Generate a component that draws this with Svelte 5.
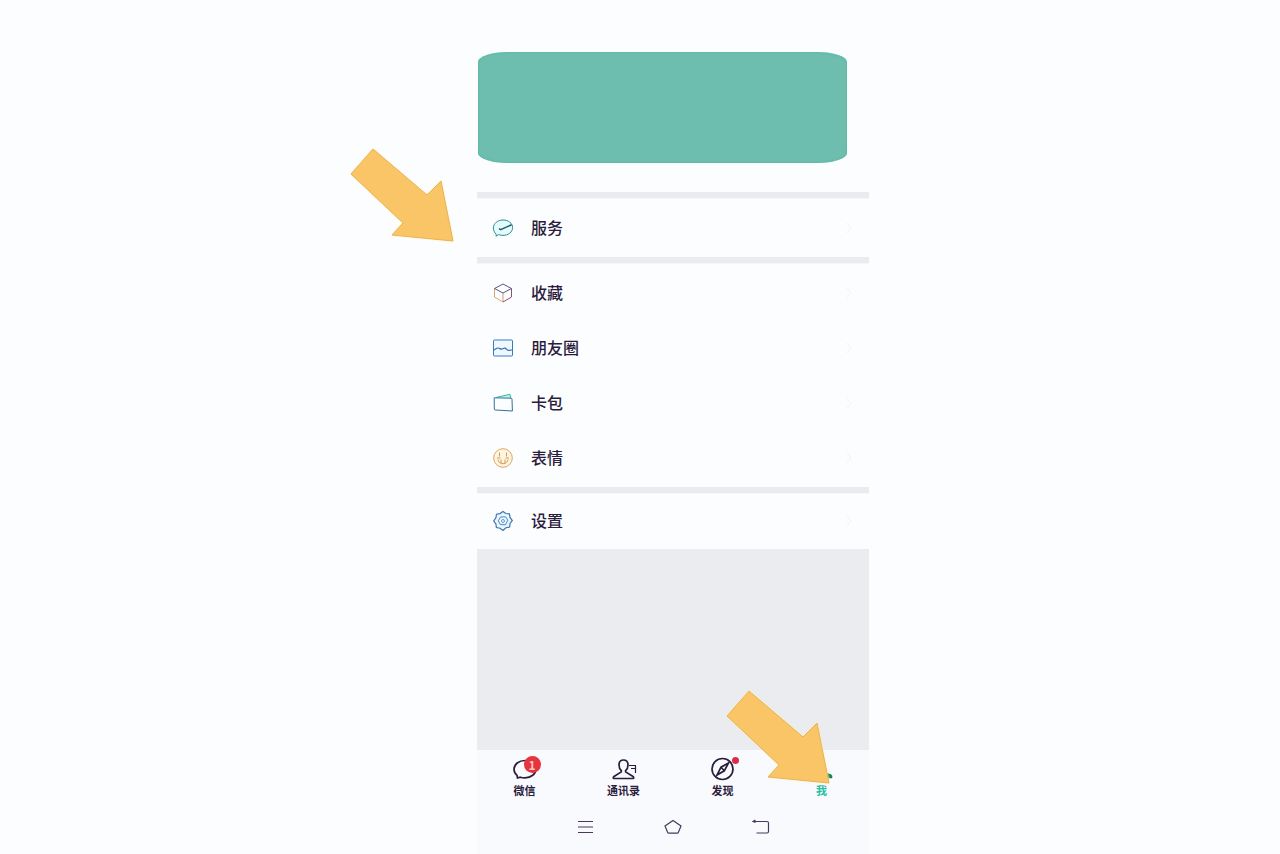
<script lang="ts">
  const groups = [
    [{ id: "service", label: "服务" }],
    [
      { id: "favorites", label: "收藏" },
      { id: "moments", label: "朋友圈" },
      { id: "cards", label: "卡包" },
      { id: "stickers", label: "表情" }
    ],
    [{ id: "settings", label: "设置" }]
  ];

  const tabs = [
    { id: "chats", label: "微信" },
    { id: "contacts", label: "通讯录" },
    { id: "discover", label: "发现" },
    { id: "me", label: "我" }
  ];

  let active = $state("me");
</script>

{#snippet arrow(place: string)}
  <svg class="arrow {place}" viewBox="0 0 104 94" aria-hidden="true">
    <path d="M23 1 77 47 91 33 103 93 42 87 53 75 1 26Z" />
  </svg>
{/snippet}

<div class="page">
  <main class="phone">
    <header class="profile">
      <div class="profile-card"></div>
    </header>

    {#each groups as group}
      <ul class="group">
        {#each group as item}
          <li>
            <button class="row">
              <svg class="row-icon" viewBox="0 0 22 22" aria-hidden="true">
                {#if item.id === "service"}
                  <path d="M4.2 17.2C2.4 15.6 1.4 13.4 1.4 11 1.4 6.4 5.7 3 11 3s9.6 3.200 9.600 7.600-4.300 7.800-9.600 7.800c-1.600 0-3-.3-4.400-.8L4 19.200Z" fill="#e4fbfc" stroke="#338a94" />
                  <path d="m7 11.600 1.600 1 11-4.800" fill="none" stroke="#205f70" stroke-width="1.500" />
                {:else if item.id === "favorites"}
                  <path d="M2.500 6.500V15l8.500 5" fill="none" stroke="#dfa368" />
                  <path d="M11 20V11" fill="none" stroke="#d49a75" />
                  <path d="m11 20 8.500-5V6.500" fill="none" stroke="#8a5078" />
                  <path d="M11 2 2.500 6.500 11 11l8.500-4.500Z" fill="none" stroke="#5a5488" />
                {:else if item.id === "moments"}
                  <rect x="1.500" y="3" width="19" height="16" rx="1" fill="#eef8ff" stroke="#3b79bd" />
                  <path d="M1.500 13c2-.3 2.500-2 4.500-2 1.500 0 2.200 1.200 3.500 1.200 1.600 0 2.200-1.500 3.600-1.100 1.800.6 2 2.800 4 2.300 1-.3 1.600-.5 2.900-.4" fill="none" stroke="#3b70ac" stroke-width="1.200" />
                {:else if item.id === "cards"}
                  <path d="m4 5.500 14-3.200.8 3.600" fill="#bdf3e4" stroke="#38b6a0" />
                  <path d="M2.200 5.800 19 6.200q1 0 1 1L20.400 19 3.400 18q-1 0-1.100-1Z" fill="#fbfdff" stroke="#326f9a" />
                {:else if item.id === "stickers"}
                  <circle cx="11" cy="11" r="9.300" fill="#fff4df" stroke="#dca75f" />
                  <path d="M7.500 5.500v4M14.500 5.500v4M5 11h3.500M13.500 11H17M6 12.500c.5 2.800 2.300 4.200 5 4.200s4.500-1.400 5-4.200M9 12.500v3.500M13 12.500v3.500" fill="none" stroke="#d29a58" />
                {:else}
                  <path d="m11 1.500 2.800 2 3.600.4.6 3.500 2.300 3-2.200 3-.5 3.700-3.700.6L11 20.500l-3-2.300-3.600-.7-.5-3.500L1.700 11l2.200-3.200.6-3.600 3.500-.6Z" fill="#e9f5ff" stroke="#3d77ae" stroke-width="1.200" />
                  <path d="m8.500 7 5-.2 2.300 3.400-2.300 4.600-5.200-.3-2-3.700Z" fill="none" stroke="#4b8ac4" />
                  <circle cx="11" cy="11" r="1.500" fill="none" stroke="#69a0d2" />
                {/if}
              </svg>
              <span class="row-label">{item.label}</span>
              <svg class="chevron" viewBox="0 0 6 12" aria-hidden="true">
                <path d="m1 1 4 5-4 5" />
              </svg>
            </button>
          </li>
        {/each}
      </ul>
    {/each}

    <div class="filler"></div>

    <footer>
      <nav class="tabs">
        {#each tabs as tab}
          <button class="tab" class:active={active === tab.id} onclick={() => (active = tab.id)}>
            <span class="tab-icon">
              <svg viewBox="0 0 28 24" aria-hidden="true">
                {#if tab.id === "chats"}
                  <path d="M6 18.300C4 16.700 3 14.700 3 12.300 3 7.200 8 3.500 14 3.500s11 3.600 11 8.500-5 8.800-11 8.800c-1.800 0-3.200-.1-4.700-.6L6.500 21Z" />
                {:else if tab.id === "contacts"}
                  <path d="M11.300 13.700C9.400 12 9 10.300 9 8c0-3 1.800-5 4.500-5S18 5 18 8c0 2.300-.5 4-2.400 5.700v1.200l7.400 4.600c1 .8 1 2 0 2H4c-1 0-1-1.200 0-2l7.300-4.600Z" />
                  <path d="M19 8.500h7M21 11.500h5M25.500 9v7" stroke-width="1.200" />
                {:else if tab.id === "discover"}
                  <circle cx="13.500" cy="12" r="10.500" />
                  <path d="M19.500 6 12 10.200 8 18l7.300-4.200Z" />
                  <path d="m12 10.200 3.300 3.600" />
                {:else}
                  <circle cx="12" cy="9" r="3.500" />
                  <path d="M4 20.500q0-1 1-1.600l5-2.400h8l4.500 1.500q1.500.8 1 2.500Z" />
                {/if}
              </svg>
              {#if tab.id === "chats"}
                <span class="badge">1</span>
              {:else if tab.id === "discover"}
                <span class="dot"></span>
              {/if}
            </span>
            <span>{tab.label}</span>
          </button>
        {/each}
      </nav>

      <div class="system-nav">
        <button aria-label="菜单">
          <svg viewBox="0 0 20 16"><path d="M3 2.500h15M3 8h15M3 13.500h15" /></svg>
        </button>
        <button aria-label="主页">
          <svg viewBox="0 0 20 16"><path d="M10 1.500 18 7l-2.700 6.500q-.3.700-1 .7H5.700q-.7 0-1-.7L2 7Z" /></svg>
        </button>
        <button aria-label="返回">
          <svg viewBox="0 0 20 16"><path d="M4.500 1 2 2.500l2.500 1M2.500 2.500H16q1.500 0 1.500 1.500v8.500q0 1.500-1.500 1.500H5.500" /></svg>
        </button>
      </div>
    </footer>

    {@render arrow("to-service")}
    {@render arrow("to-me")}
  </main>
</div>

<style>
  :global(body) {
    margin: 0;
    background: #fcfdff;
  }

  .page {
    display: flex;
    justify-content: center;
    box-sizing: border-box;
    min-height: 100vh;
    padding-left: 66px;
    font-family: "Noto Sans CJK SC", "Noto Sans", sans-serif;
    color: #2a1c3c;
  }

  .phone {
    position: relative;
    display: flex;
    flex-direction: column;
    width: 100%;
    max-width: 392px;
    background: #fcfdff;
  }

  button {
    border: none;
    background: none;
    padding: 0;
    color: inherit;
    font-family: inherit;
    cursor: pointer;
  }

  svg {
    display: block;
    flex: none;
  }

  .profile {
    padding: 52px 22px 29px 1px;
  }

  .profile-card {
    height: 111px;
    border-radius: 30px / 10px;
    background: #6dbeae;
    box-shadow: inset 0 0 3px #50b5a0;
  }

  .group {
    list-style: none;
    margin: 0;
    padding: 2px 0;
    border-top: 6px solid #e9ebef;
    box-shadow: inset 0 1px #f5f6f9;
  }

  .group:last-of-type {
    padding: 0 0 1px;
  }

  .row {
    display: flex;
    align-items: center;
    width: 100%;
    height: 55px;
    padding: 0 17px 0 15px;
    font-size: 16px;
    font-weight: 500;
    line-height: 24px;
  }

  .row-icon {
    width: 22px;
    height: 22px;
    margin-right: 17px;
  }

  .row-label {
    padding-bottom: 2px;
  }

  .chevron {
    width: 6px;
    height: 12px;
    margin-left: auto;
    fill: none;
    stroke: #f1f3f8;
  }

  .filler {
    flex: 1;
    background: #ebecef;
  }

  footer {
    background: #f9fafd;
  }

  .tabs {
    display: grid;
    grid-template-columns: repeat(4, 1fr);
    margin: 0 -2px;
    padding-top: 7px;
  }

  .tab {
    display: flex;
    flex-direction: column;
    align-items: center;
    font-size: 11px;
    font-weight: 700;
    line-height: 16px;
    gap: 1px;
  }

  .tab.active {
    color: #25bda5;
  }

  .tab-icon {
    position: relative;
  }

  .tab-icon svg {
    width: 28px;
    height: 24px;
    fill: none;
    stroke: #2a1c3c;
    stroke-width: 1.7;
  }

  .tab.active svg {
    fill: #16834b;
    stroke: #16834b;
  }

  .badge {
    position: absolute;
    top: -1px;
    right: -2px;
    width: 17px;
    height: 17px;
    border-radius: 50%;
    background: #e5343e;
    color: #ffc4c4;
    font-size: 12px;
    line-height: 17px;
  }

  .dot {
    position: absolute;
    top: 0;
    right: -2px;
    width: 7px;
    height: 7px;
    border-radius: 50%;
    background: #d92d48;
  }

  .system-nav {
    display: grid;
    grid-template-columns: repeat(3, 1fr);
    padding: 21px 64px 19px;
  }

  .system-nav button {
    display: flex;
    justify-content: center;
  }

  .system-nav svg {
    width: 20px;
    height: 16px;
    fill: none;
    stroke: #49385c;
    stroke-width: 1.2;
  }

  .arrow {
    position: absolute;
    width: 104px;
    height: 94px;
    fill: #fac566;
    stroke: #e5b356;
    stroke-width: 1;
    pointer-events: none;
    filter: drop-shadow(0 0 1px #fff0c0);
  }

  .to-service {
    top: 148px;
    left: -127px;
  }

  .to-me {
    bottom: 70px;
    left: 249px;
  }
</style>
